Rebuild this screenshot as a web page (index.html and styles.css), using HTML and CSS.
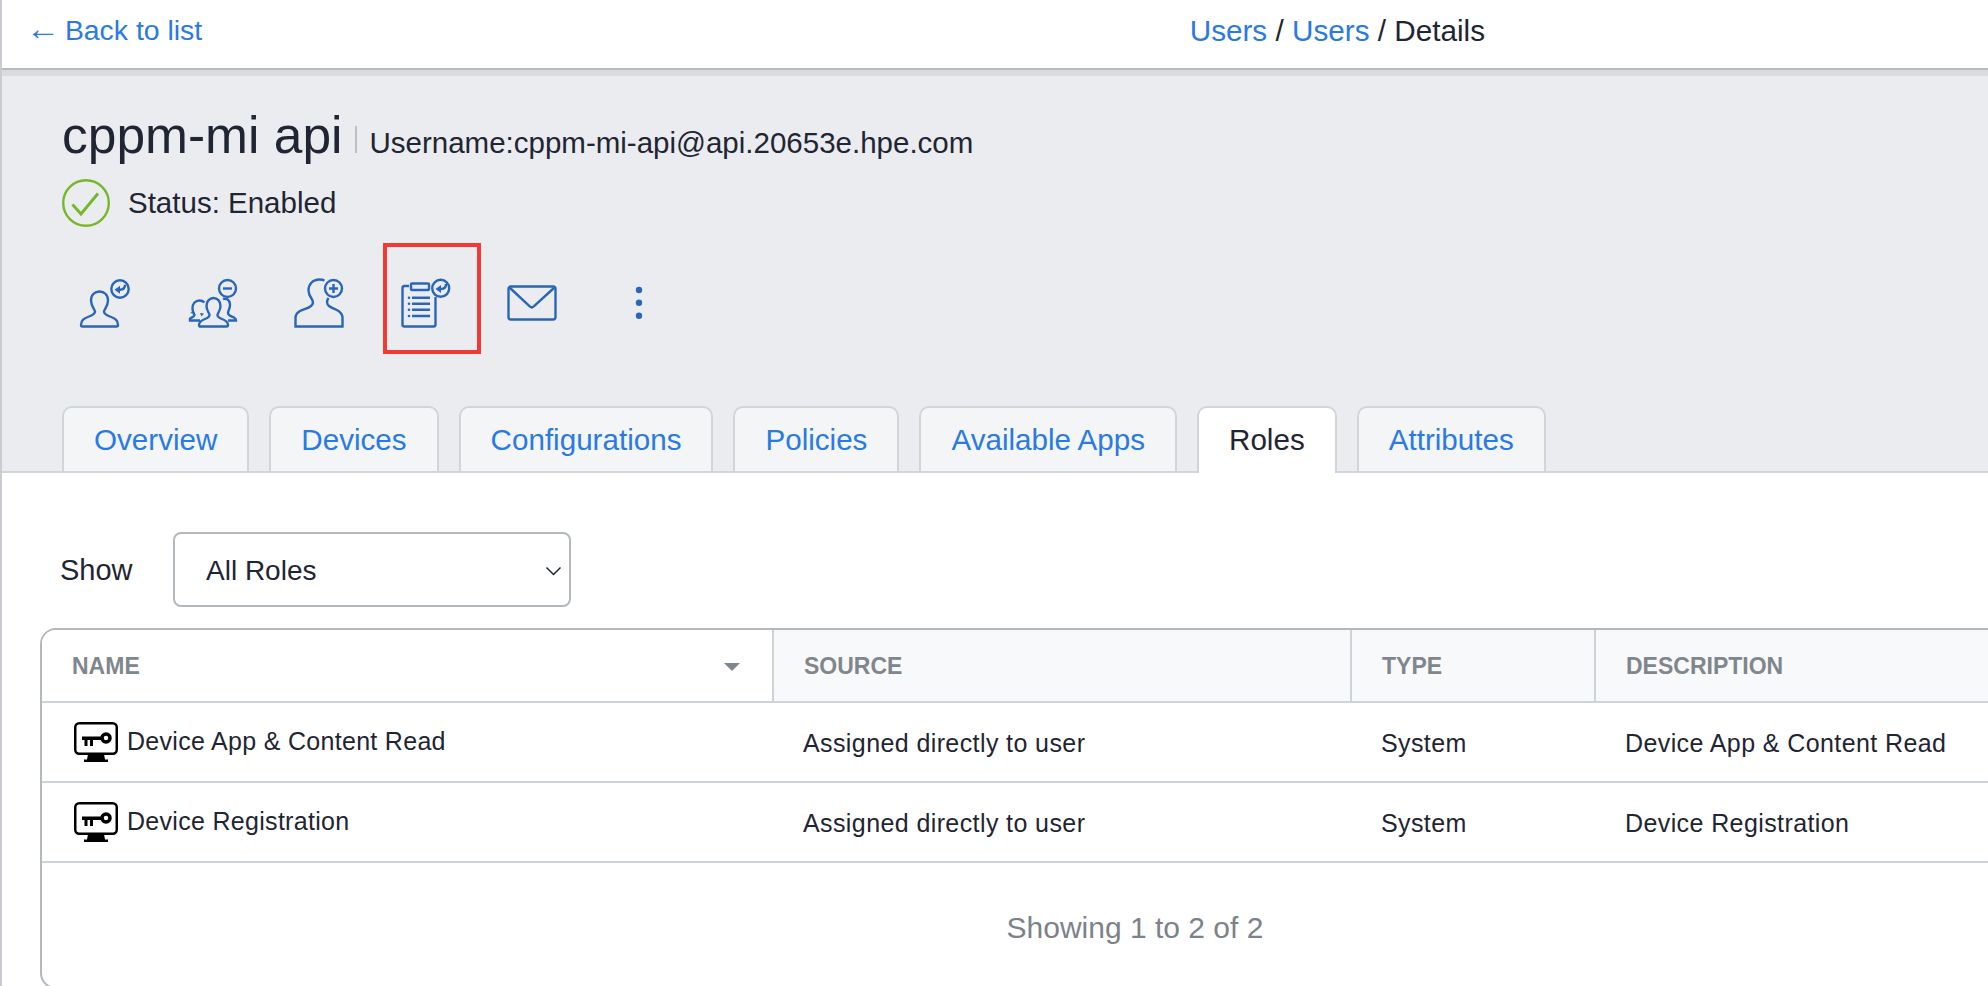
FILE: index.html
```html
<!DOCTYPE html>
<html lang="en">
<head>
    <meta charset="UTF-8">
    <meta name="viewport" content="width=device-width, initial-scale=1.0">
    <title>User Details</title>
    <link rel="stylesheet" href="styles.css">
</head>
<body>
    <div class="topbar">
        <a class="back-link" href="#"><span class="back-arrow">←</span> Back to list</a>
        <div class="breadcrumb">
            <a href="#">Users</a> / <a href="#">Users</a> / Details
        </div>
    </div>

    <div class="user-header">
        <div class="title-row">
            <h1>cppm-mi api</h1>
            <span class="title-sep"></span>
            <span class="username">Username:cppm-mi-api@api.20653e.hpe.com</span>
        </div>
        <div class="status-row">
            <svg class="status-icon" viewBox="0 0 48 48">
                <circle cx="24" cy="24" r="22.800" />
                <path d="M10.500 25.500l8.500 9.500L36 14.500" />
            </svg>
            <span>Status: Enabled</span>
        </div>

        <div class="actions">
            <div class="action">
                <svg viewBox="0 0 64 64">
                    <path d="M14 56.500H46.500a1.500 1.500 0 0 0 1.500-1.500c0-5-3-6.500-8-8.500c-4-1.500-6-3-6-5c0-2 4-5 4-11c0-6-4-9-8.500-9s-8.500 3-8.500 9c0 6 4 9 4 11c0 2-2 3.500-6 5c-5 2-8 3.500-8 8.500a1.500 1.500 0 0 0 1.500 1.500Z" />
                    <circle cx="50" cy="19" r="8.700" />
                    <path d="M50 19.800c3 0 5-2 5-5" />
                    <path class="solid" d="M44.500 19.800l5.500-4v8Z" />
                </svg>
            </div>
            <div class="action">
                <svg viewBox="0 0 64 64">
                    <path d="M22 56.500H49.500a1.500 1.500 0 0 0 1.500-1.500c0-3-2-4.500-6-6c-3-1.200-4.500-2.500-4.500-4c0-2 3-4 3-9c0-5-3.200-8-7-8s-7 3-7 8c0 5 3 7 3 9c0 1.500-1.500 2.800-4.500 4c-4 1.500-6 3-6 6a1.500 1.500 0 0 0 1.500 1.500Z" />
                    <path d="M23 50.500H13v-2c2-1.500 4-1.500 4.500-3.500c-1.500-2-2-3.500-2-6.500c0-5 3-8 7-8c2 0 3.500.5 5 2" />
                    <path d="M46 29c3-1 7 .5 7 6c0 4-2 5.500-2 8c0 2.500 3 3 6 4.500c1.500.8 2 1.800 2 3h-8" />
                    <path class="solid" d="M13 43l4-2l1 3ZM23 43l4 .5l-2.500 3Z" />
                    <circle cx="50.500" cy="18.500" r="8.500" />
                    <path d="M46 18.500h9" />
                </svg>
            </div>
            <div class="action">
                <svg viewBox="0 0 64 64">
                    <path d="M44.500 28c-2 2.500-2 6 .5 8c3 2.500 6.500 3 9.500 5c3 2 4 4 4 7v8.500H11.500V48c0-3 1-5 4.500-7c4-2 8-2.500 11-5c2.500-2 2.500-4.500.5-7.500c-2-3-3-5-3-8c0-6 4-11 11-11c2 0 3.500.3 5 1" />
                    <circle cx="49.500" cy="18.500" r="8.500" />
                    <path d="M45 18.500h9M49.500 14v9" />
                </svg>
            </div>
            <div class="action action-flagged">
                <svg viewBox="0 0 64 64">
                    <path d="M18 16h-4.500a2 2 0 0 0-2 2v36.500a2 2 0 0 0 2 2H42.500a2 2 0 0 0 2-2V27" />
                    <rect x="20" y="13.500" width="18" height="6.500" rx="1" />
                    <path d="M21 27.700h18M21 33.700h18M21 39.700h18M21 46h18" />
                    <circle class="solid" cx="18" cy="27.700" r="1.300" />
                    <circle class="solid" cx="18" cy="33.700" r="1.300" />
                    <circle class="solid" cx="18" cy="39.700" r="1.300" />
                    <circle class="solid" cx="18" cy="46" r="1.300" />
                    <circle cx="49.700" cy="18.300" r="8.500" />
                    <path d="M50 19c3 0 5-2 5-5" />
                    <path class="solid" d="M44.500 19l5.500-4v8Z" />
                </svg>
            </div>
            <div class="action">
                <svg viewBox="0 0 64 64">
                    <rect x="10.500" y="16.500" width="47" height="33" rx="2.500" />
                    <path d="M11.500 17.500L32 36.500a2.500 2.500 0 0 0 3.500 0L56.500 17.500" />
                </svg>
            </div>
            <div class="action">
                <svg viewBox="0 0 64 64">
                    <circle class="solid" cx="34" cy="20" r="3.200" />
                    <circle class="solid" cx="34" cy="32.700" r="3.200" />
                    <circle class="solid" cx="34" cy="45.700" r="3.200" />
                </svg>
            </div>
        </div>

        <div class="tabs">
            <a class="tab" href="#">Overview</a>
            <a class="tab" href="#">Devices</a>
            <a class="tab" href="#">Configurations</a>
            <a class="tab" href="#">Policies</a>
            <a class="tab" href="#">Available Apps</a>
            <a class="tab active" href="#">Roles</a>
            <a class="tab" href="#">Attributes</a>
        </div>
    </div>

    <div class="content">
        <div class="filter">
            <span class="filter-label">Show</span>
            <div class="select">
                <span>All Roles</span>
                <svg viewBox="0 0 16 10"><path d="M1 1.500L8 8.500l7-7" /></svg>
            </div>
        </div>

        <div class="table-card">
            <table>
                <colgroup>
                    <col class="col-name">
                    <col class="col-source">
                    <col class="col-type">
                    <col>
                </colgroup>
                <thead>
                    <tr>
                        <th class="sorted">NAME<span class="caret"></span></th>
                        <th>SOURCE</th>
                        <th>TYPE</th>
                        <th>DESCRIPTION</th>
                    </tr>
                </thead>
                <tbody>
                    <tr>
                        <td>
                            <div class="role-name">
                                <svg class="role-icon" viewBox="0 0 44 40">
                                    <rect class="screen" x="1.250" y="1.250" width="41.500" height="30.500" rx="4" />
                                    <path d="M8 14.500H28v3.500H19v6h-3v-6h-2.500v6h-3v-6H8ZM14 32h16l1 5.500h3V40H10v-2.500h3Z" />
                                    <circle class="bow" cx="32" cy="16" r="4" />
                                </svg>
                                Device App &amp; Content Read
                            </div>
                        </td>
                        <td>Assigned directly to user</td>
                        <td>System</td>
                        <td>Device App &amp; Content Read</td>
                    </tr>
                    <tr>
                        <td>
                            <div class="role-name">
                                <svg class="role-icon" viewBox="0 0 44 40">
                                    <rect class="screen" x="1.250" y="1.250" width="41.500" height="30.500" rx="4" />
                                    <path d="M8 14.500H28v3.500H19v6h-3v-6h-2.500v6h-3v-6H8ZM14 32h16l1 5.500h3V40H10v-2.500h3Z" />
                                    <circle class="bow" cx="32" cy="16" r="4" />
                                </svg>
                                Device Registration
                            </div>
                        </td>
                        <td>Assigned directly to user</td>
                        <td>System</td>
                        <td>Device Registration</td>
                    </tr>
                </tbody>
            </table>
            <div class="table-footer">Showing 1 to 2 of 2</div>
        </div>
    </div>
</body>
</html>
```

FILE: styles.css
```css
html, body {
    height: 100%;
    overflow: hidden;
}
body {
    margin: 0;
    font-family: "Liberation Sans", Arial, sans-serif;
    color: #1f2532;
    background-color: white;
    border-left: 2px solid #c9ccd0;
    width: 1986px;
}
a {
    color: #2a7ae2;
    text-decoration: none;
}

.topbar {
    display: flex;
    height: 68px;
    align-items: center;
    padding-left: 24px;
    border-bottom: 2px solid #b6babf;
}
.back-link {
    font-size: 28.400px;
    margin-bottom: 8px;
}
.back-arrow {
    display: inline-block;
    font-size: 34px;
    line-height: 20px;
    margin-right: -3px;
}
.breadcrumb {
    font-size: 29.700px;
    margin-left: auto;
    margin-right: 503px;
    margin-bottom: 6px;
}

.user-header {
    background-color: #eaecf0;
    border-top: 6px solid #d9dbdf;
    border-bottom: 2px solid #cfd5d9;
    height: 395px;
    padding-left: 60px;
}
.title-row {
    display: flex;
    align-items: baseline;
    padding-top: 34px;
    height: 51px;
}
h1 {
    margin: 0;
    font-size: 51.500px;
    line-height: 51px;
    font-weight: normal;
}
.title-sep {
    width: 2px;
    height: 27px;
    margin: 0 12px 0 13px;
    background-color: #bcc1c6;
}
.username {
    font-size: 29.500px;
}
.status-row {
    display: flex;
    align-items: center;
    gap: 18px;
    margin-top: 18px;
    font-size: 29.500px;
}
.status-icon {
    width: 48px;
    height: 48px;
    fill: none;
    stroke: #76b82a;
    stroke-width: 2.400;
}
.status-icon path {
    stroke-width: 3;
}

.actions {
    display: flex;
    gap: 43px;
    margin-top: 43px;
    margin-left: 8px;
}
.action {
    position: relative;
    width: 64px;
    height: 64px;
}
.action svg {
    display: block;
    width: 64px;
    height: 64px;
    fill: none;
    stroke: #2a66b8;
    stroke-width: 2.400;
}
.action svg .solid {
    fill: #2a66b8;
    stroke: none;
}
.action-flagged::after {
    content: "";
    position: absolute;
    top: -27px;
    left: -8px;
    right: -26px;
    bottom: -20px;
    border: 4px solid #f03a33;
}

.tabs {
    display: flex;
    gap: 20px;
    margin-top: 72px;
}
.tab {
    display: block;
    box-sizing: border-box;
    height: 65px;
    line-height: 63px;
    padding: 0 30px;
    font-size: 29.600px;
    background-color: #f3f5f7;
    border: 2px solid #cfd5d9;
    border-bottom: none;
    border-radius: 10px 10px 0 0;
}
.tab.active {
    height: 67px;
    color: #1f2532;
    background-color: white;
}

.filter {
    display: flex;
    align-items: center;
    padding: 59px 0 0 58px;
}
.filter-label {
    font-size: 29px;
    width: 113px;
    padding-top: 2px;
}
.select {
    display: flex;
    align-items: center;
    justify-content: space-between;
    width: 398px;
    height: 75px;
    padding: 2px 7px 0 31px;
    box-sizing: border-box;
    font-size: 28px;
    border: 2px solid #b3b8bd;
    border-radius: 8px;
}
.select svg {
    width: 17px;
    height: 10px;
    fill: none;
    stroke: #1f2532;
    stroke-width: 1.500;
}

.table-card {
    margin: 21px 0 0 38px;
    width: 2190px;
    border: 2px solid #b3b8bd;
    border-radius: 16px;
    overflow: hidden;
    box-sizing: border-box;
}
table {
    width: 100%;
    border-collapse: collapse;
    table-layout: fixed;
}
.col-name { width: 731px; }
.col-source { width: 578px; }
.col-type { width: 244px; }
th {
    height: 72px;
    padding: 2px 0 0 30px;
    text-align: left;
    font-size: 23px;
    color: #80868d;
    background-color: #f8f9fa;
    border-left: 2px solid #cdd3d8;
    border-bottom: 2px solid #cdd3d8;
    box-sizing: border-box;
}
th.sorted {
    position: relative;
    background-color: white;
    border-left: none;
}
.caret {
    position: absolute;
    right: 32px;
    top: 33px;
    border-left: 8px solid transparent;
    border-right: 8px solid transparent;
    border-top: 8px solid #80868d;
}
td {
    height: 80px;
    padding: 3px 0 0 30px;
    font-size: 25px;
    letter-spacing: 0.400px;
    border-bottom: 2px solid #cdd3d8;
    box-sizing: border-box;
}
.role-name {
    display: flex;
    align-items: center;
    gap: 9px;
    margin-bottom: 4px;
    padding-left: 2px;
    letter-spacing: 0.300px;
}
.role-icon {
    width: 44px;
    height: 40px;
    flex-shrink: 0;
    fill: black;
}
.role-icon .screen {
    fill: none;
    stroke: black;
    stroke-width: 2.500;
}
.role-icon .bow {
    fill: white;
    stroke: black;
    stroke-width: 3.500;
}
.table-footer {
    padding-top: 48px;
    height: 124px;
    box-sizing: border-box;
    text-align: center;
    font-size: 30px;
    color: #7c8289;
}
```
